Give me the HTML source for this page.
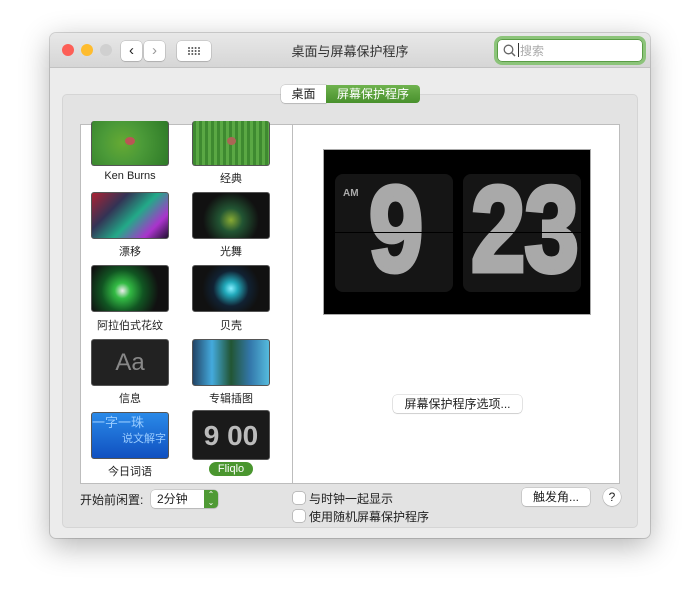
<!DOCTYPE html>
<html><head><meta charset="utf-8"><style>
*{box-sizing:border-box;margin:0;padding:0}
body{width:700px;height:604px;background:#fff;font-family:"Liberation Sans","Noto Sans CJK SC",sans-serif;position:relative;overflow:hidden}
.a{position:absolute}
.win{left:50px;top:33px;width:600px;height:505px;background:#ececec;border-radius:6px;box-shadow:0 8px 30px rgba(0,0,0,.3),0 0 0 1px rgba(0,0,0,.15)}
.tb{left:0;top:0;width:600px;height:35px;background:linear-gradient(#e8e8e8,#d6d6d6);border-bottom:1px solid #c2c2c2;border-radius:6px 6px 0 0}
.dot{width:12px;height:12px;border-radius:50%;top:11px}
.btn{background:#fff;border-radius:4px;box-shadow:0 0 0 .5px rgba(0,0,0,.2),0 1px 1px rgba(0,0,0,.1);font-size:12px;color:#222;text-align:center}
.t{font-size:11px;color:#222;text-align:center;width:100px}
.th{width:78px;height:47px;border-radius:3px;border:1px solid #555;overflow:hidden}
.cb{width:12px;height:12px;background:#fff;border-radius:3px;box-shadow:0 0 0 .5px rgba(0,0,0,.35)}
.lb{font-size:12px;color:#222}
.card{background:#151515;border-radius:8px;width:118px;height:118px;top:24px;overflow:hidden}
.dg{color:#a9a9a9;font-weight:bold;font-size:122px;line-height:122px;transform:scaleX(.8);transform-origin:left top;letter-spacing:-1px;-webkit-text-stroke:5px #a9a9a9}
</style></head><body>
<div class="a win">
 <div class="a tb">
  <div class="a dot" style="left:12px;background:#fd5f57"></div>
  <div class="a dot" style="left:31px;background:#febc2e"></div>
  <div class="a dot" style="left:50px;background:#d0d0d0"></div>
  <div class="a btn" style="left:71px;top:8px;width:21px;height:20px;line-height:19px;font-size:15px">&#8249;</div>
  <div class="a btn" style="left:94px;top:8px;width:21px;height:20px;line-height:19px;font-size:15px;color:#999">&#8250;</div>
  <div class="a btn" style="left:127px;top:8px;width:34px;height:20px"><svg width="34" height="20"><g fill="#555"><circle cx="12" cy="7" r="1"/><circle cx="15.3" cy="7" r="1"/><circle cx="18.6" cy="7" r="1"/><circle cx="22" cy="7" r="1"/><circle cx="12" cy="10" r="1"/><circle cx="15.3" cy="10" r="1"/><circle cx="18.6" cy="10" r="1"/><circle cx="22" cy="10" r="1"/><circle cx="12" cy="13" r="1"/><circle cx="15.3" cy="13" r="1"/><circle cx="18.6" cy="13" r="1"/><circle cx="22" cy="13" r="1"/></g></svg></div>
  <div class="a" style="left:0;width:600px;top:8px;text-align:center;font-size:13px;color:#333">桌面与屏幕保护程序</div>
  <div class="a" style="left:447px;top:6px;width:146px;height:23px;border-radius:5px;background:#fff;box-shadow:0 0 0 3px #8cc47a,0 0 0 1px #5a9c45 inset"></div>
  <svg class="a" style="left:453px;top:11px" width="14" height="14"><circle cx="5.5" cy="5.5" r="4.3" fill="none" stroke="#666" stroke-width="1.3"/><line x1="8.6" y1="8.6" x2="12" y2="12" stroke="#666" stroke-width="1.5"/></svg>
  <div class="a" style="left:468px;top:10px;width:1px;height:14px;background:#333"></div>
  <div class="a" style="left:470px;top:9px;font-size:12px;color:#aaa">搜索</div>
 </div>
 <div class="a" style="left:12px;top:61px;width:576px;height:434px;background:#e3e3e3;border-radius:5px;border:1px solid #d5d5d5"></div>
 <div class="a btn" style="left:231px;top:52px;width:45px;height:18px;line-height:18px;border-radius:4px 0 0 4px;font-size:12px">桌面</div>
 <div class="a" style="left:276px;top:52px;width:94px;height:18px;line-height:18px;background:linear-gradient(#6fb34f,#48902c);color:#fff;font-size:12px;text-align:center;border-radius:0 4px 4px 0">屏幕保护程序</div>
 <div class="a" style="left:30px;top:91px;width:540px;height:360px;background:#fff;border:1px solid #bdbdbd"></div>
 <div class="a" style="left:242px;top:91px;width:1px;height:360px;background:#bdbdbd"></div>
 <div class="a th" style="left:41px;top:88px;height:45px;background:radial-gradient(circle at 40% 50%,#6a3 0,#4b9a38 40%,#2e7a28);border-top:none"><div class="a" style="left:33px;top:16px;width:10px;height:8px;border-radius:50%;background:#b55"></div></div>
 <div class="a th" style="left:142px;top:88px;height:45px;background:repeating-linear-gradient(90deg,#3e8a30 0 3px,#5aa844 3px 6px);border-top:none"><div class="a" style="left:34px;top:16px;width:9px;height:8px;border-radius:50%;background:#a65"></div></div>
 <div class="a t" style="left:30px;top:137px">Ken Burns</div><div class="a t" style="left:131px;top:137px">经典</div>
 <div class="a th" style="left:41px;top:159px;background:linear-gradient(135deg,#a23 0,#335 30%,#2a8 55%,#a3c 80%,#213)"></div>
 <div class="a th" style="left:142px;top:159px;background:radial-gradient(circle at 50% 60%,#8a3 0,#253 25%,#111 60%)"></div>
 <div class="a t" style="left:30px;top:210px">漂移</div><div class="a t" style="left:131px;top:210px">光舞</div>
 <div class="a th" style="left:41px;top:232px;background:radial-gradient(circle at 40% 55%,#eee 0,#3b4 15%,#152 40%,#111 70%)"></div>
 <div class="a th" style="left:142px;top:232px;background:radial-gradient(circle at 50% 50%,#8ef 0,#2ab 15%,#123 40%,#111 65%)"></div>
 <div class="a t" style="left:30px;top:284px">阿拉伯式花纹</div><div class="a t" style="left:131px;top:284px">贝壳</div>
 <div class="a th" style="left:41px;top:306px;background:#222;color:#888;font-size:24px;text-align:center;line-height:45px">Aa</div>
 <div class="a th" style="left:142px;top:306px;background:linear-gradient(90deg,#246 0,#4ad 25%,#253 50%,#37a 75%,#5bd)"></div>
 <div class="a t" style="left:30px;top:357px">信息</div><div class="a t" style="left:131px;top:357px">专辑插图</div>
 <div class="a th" style="left:41px;top:379px;background:linear-gradient(#2a8ae8,#1050c0);color:#9cf;font-size:13px;line-height:15px;padding-top:2px;white-space:nowrap">一字一珠<br><span style="padding-left:30px;font-size:11px">说文解字</span></div>
 <div class="a th" style="left:142px;top:377px;height:50px;background:#1a1a1a;color:#bbb;font-weight:bold;font-size:28px;line-height:50px;text-align:center">9 00</div>
 <div class="a t" style="left:30px;top:430px">今日词语</div>
 <div class="a" style="left:159px;top:429px;width:44px;height:14px;border-radius:7px;background:#4a962f;color:#fff;font-size:11px;text-align:center;line-height:14px">Fliqlo</div>
 <div class="a" style="left:273px;top:116px;width:268px;height:166px;background:#000;border:1px solid #aaa">
  <div class="a card" style="left:11px"><div class="a" style="left:8px;top:14px;color:#aaa;font-size:10px;font-weight:bold">AM</div><div class="a dg" style="left:34px;top:-6px">9</div><div class="a" style="left:0;top:58px;width:118px;height:1px;background:#000"></div></div>
  <div class="a card" style="left:139px"><div class="a dg" style="left:8px;top:-6px">23</div><div class="a" style="left:0;top:58px;width:118px;height:1px;background:#000"></div></div>
 </div>
 <div class="a btn" style="left:343px;top:362px;width:129px;height:18px;line-height:18px">屏幕保护程序选项...</div>
 <div class="a lb" style="left:30px;top:458px">开始前闲置:</div>
 <div class="a btn" style="left:101px;top:457px;width:67px;height:18px;line-height:18px;text-align:left;padding-left:6px">2分钟</div>
 <div class="a" style="left:154px;top:457px;width:14px;height:18px;background:#4f9a35;border-radius:0 4px 4px 0;color:#fff;font-size:8px;text-align:center;line-height:8px;padding-top:1px">&#8963;<br>&#8964;</div>
 <div class="a cb" style="left:243px;top:459px"></div><div class="a lb" style="left:259px;top:457px">与时钟一起显示</div>
 <div class="a cb" style="left:243px;top:477px"></div><div class="a lb" style="left:259px;top:475px">使用随机屏幕保护程序</div>
 <div class="a btn" style="left:472px;top:455px;width:68px;height:18px;line-height:18px">触发角...</div>
 <div class="a btn" style="left:553px;top:455px;width:18px;height:18px;border-radius:50%;line-height:18px;font-size:12px">?</div>
</div>
</body></html>
